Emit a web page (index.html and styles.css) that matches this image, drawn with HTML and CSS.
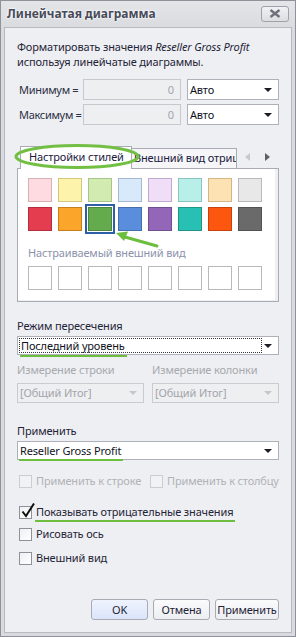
FILE: index.html
```html
<!DOCTYPE html>
<html lang="ru">
<head>
<meta charset="utf-8">
<title>Линейчатая диаграмма</title>
<link rel="stylesheet" href="styles.css">
</head>
<body>
<div class="window">
  <div class="titlebar">
    <span class="title">Линейчатая диаграмма</span>
    <div class="close"><svg width="12" height="9" viewBox="0 0 12 9"><path d="M1.5 1 L10.5 8 M10.5 1 L1.5 8" stroke="#6f727a" stroke-width="2.4" fill="none"/></svg></div>
  </div>
  <div class="content">
    <p class="intro">Форматировать значения <i>Reseller Gross Profit</i><br>используя линейчатые диаграммы.</p>

    <div class="range-row first">
      <span class="range-label">Минимум =</span>
      <div class="num">0</div>
      <div class="combo small">Авто<span class="arrow"></span></div>
    </div>
    <div class="range-row">
      <span class="range-label">Максимум =</span>
      <div class="num">0</div>
      <div class="combo small">Авто<span class="arrow"></span></div>
    </div>

    <div class="tabs">
      <div class="tab-strip">
        <div class="tab active">Настройки стилей</div>
        <div class="tab inactive"><span>Внешний вид отрицательных значений</span></div>
        <div class="tab-nav">
          <span class="nav-left"></span>
          <span class="nav-right"></span>
        </div>
      </div>
      <div class="tab-panel">
        <div class="swatches">
          <span class="sw" style="background:#fddbe1;border-color:#d8b1b7"></span>
          <span class="sw" style="background:#fdf3aa;border-color:#d2c680"></span>
          <span class="sw" style="background:#d1ebb1;border-color:#a7c48b"></span>
          <span class="sw" style="background:#d8e9fc;border-color:#a4bad3"></span>
          <span class="sw" style="background:#f0ddf8;border-color:#c2abcf"></span>
          <span class="sw" style="background:#b8efe9;border-color:#87c5be"></span>
          <span class="sw" style="background:#fde3b4;border-color:#d2b684"></span>
          <span class="sw" style="background:#e8e8e8;border-color:#b9b9b9"></span>
        </div>
        <div class="swatches row2">
          <span class="sw" style="background:#e33d4f;border-color:#b12f3d"></span>
          <span class="sw" style="background:#fba52b;border-color:#c67f1e"></span>
          <span class="sw selected" style="background:#64ab4e;border-color:#4c873d"></span>
          <span class="sw" style="background:#5a8edc;border-color:#446fad"></span>
          <span class="sw" style="background:#9366b8;border-color:#714f8f"></span>
          <span class="sw" style="background:#29c0b4;border-color:#1f958c"></span>
          <span class="sw" style="background:#fc560f;border-color:#c7430b"></span>
          <span class="sw" style="background:#6a6a6a;border-color:#525252"></span>
        </div>
        <div class="custom-label">Настраиваемый внешний вид</div>
        <div class="swatches">
          <span class="sw empty"></span><span class="sw empty"></span><span class="sw empty"></span><span class="sw empty"></span>
          <span class="sw empty"></span><span class="sw empty"></span><span class="sw empty"></span><span class="sw empty"></span>
        </div>
      </div>
      <svg class="ring" width="130" height="30" viewBox="0 0 130 30"><ellipse cx="65" cy="14.5" rx="61" ry="11" fill="none" stroke="#72bf44" stroke-width="3"/></svg>
      <svg class="pointer" width="50" height="22" viewBox="0 0 50 22"><path d="M44 16 L12 7" stroke="#6dbd3f" stroke-width="3" stroke-linecap="round" fill="none"/><path d="M3 3 L15 1.5 L11 11 Z" fill="#6dbd3f"/></svg>
    </div>

    <div class="field-label lbl-mode">Режим пересечения</div>
    <div class="combo wide focus"><span class="focus-rect"><span class="mark">Последний уровень</span></span><span class="arrow"></span></div>

    <div class="dims">
      <div class="dim">
        <div class="field-label disabled">Измерение строки</div>
        <div class="combo disabled">[Общий Итог]<span class="arrow"></span></div>
      </div>
      <div class="dim">
        <div class="field-label disabled">Измерение колонки</div>
        <div class="combo disabled">[Общий Итог]<span class="arrow"></span></div>
      </div>
    </div>

    <div class="field-label lbl-apply">Применить</div>
    <div class="combo wide"><span class="mark">Reseller Gross Profit</span><span class="arrow"></span></div>

    <div class="check-row">
      <label class="check disabled"><span class="box"></span>Применить к строке</label>
      <label class="check disabled second"><span class="box"></span>Применить к столбцу</label>
    </div>

    <label class="check checked-row"><span class="box"><svg class="tick" width="16" height="16" viewBox="0 0 16 16"><path d="M2.5 8.5 L6 13 L14 0.5" stroke="#111" stroke-width="2" fill="none"/></svg></span><span class="mark">Показывать отрицательные значения</span></label>
    <label class="check axis-row"><span class="box"></span>Рисовать ось</label>
    <label class="check look-row"><span class="box"></span>Внешний вид</label>

    <div class="buttons">
      <button class="btn default">OK</button>
      <button class="btn">Отмена</button>
      <button class="btn">Применить</button>
    </div>
  </div>
</div>
</body>
</html>
```

FILE: styles.css
```css
* { box-sizing: border-box; }
html, body { margin: 0; padding: 0; }
body {
  width: 296px;
  height: 637px;
  font-family: "Noto Sans", "Open Sans", sans-serif;
  font-size: 11px;
  letter-spacing: -0.15px;
  color: #1f2438;
  overflow: hidden;
  white-space: nowrap;
}
.window {
  width: 296px;
  height: 637px;
  border: 1px solid #8f929b;
  background: linear-gradient(#e4e5e9, #d9dade 30px, #d9dade);
  display: flex;
  flex-direction: column;
}
.titlebar {
  height: 26px;
  display: flex;
  align-items: center;
  justify-content: space-between;
  padding: 0 6px 2px 6px;
}
.title {
  font-weight: bold;
  font-size: 12px;
  letter-spacing: 0;
  color: #474b59;
  text-shadow: 0 0 3px #ffffff, 0 0 2px #ffffff;
}
.close {
  width: 28px;
  height: 16px;
  border: 1px solid #9fa2aa;
  border-radius: 3px;
  background: linear-gradient(#f1f2f4, #dcdde1);
  display: flex;
  align-items: center;
  justify-content: center;
  margin-top: 1px;
}
.content {
  margin: 0 3px;
  height: 606px;
  border: 1px solid #b7bac2;
  background: #eeeff2;
  padding: 0 12px;
  display: flex;
  flex-direction: column;
  position: relative;
}
.intro {
  margin: 11px 0 0 0;
  line-height: 15px;
}
.intro i { font-style: italic; }

.range-row {
  display: flex;
  align-items: center;
  height: 21px;
  margin-top: 4px;
}
.range-row.first { margin-top: 10px; }
.range-label {
  width: 66px;
  padding-left: 2px;
  color: #2b3045;
  letter-spacing: -0.3px;
}
.num {
  width: 98px;
  height: 21px;
  border: 1px solid #c6c8ce;
  background: #eeeff1;
  color: #a3a5ab;
  text-align: right;
  padding-right: 6px;
  line-height: 19px;
}
.combo {
  position: relative;
  height: 20px;
  border: 1px solid #aeb1b9;
  background: #ffffff;
  line-height: 18px;
  padding-left: 2px;
  color: #10131d;
}
.combo.small { width: 92px; margin-left: 6px; height: 21px; line-height: 19px; }
.arrow {
  position: absolute;
  right: 6px;
  top: 50%;
  margin-top: -2px;
  width: 0; height: 0;
  border-left: 4px solid transparent;
  border-right: 4px solid transparent;
  border-top: 4px solid #1b1d22;
}

.tabs {
  position: relative;
  margin-top: 21px;
}
.tab-strip {
  height: 22px;
  display: flex;
  align-items: flex-end;
  position: relative;
  z-index: 1;
}
.tab {
  height: 22px;
  border: 1px solid #a9acb4;
  border-bottom: none;
  line-height: 20px;
  white-space: nowrap;
  overflow: hidden;
}
.tab.active {
  margin-left: 3px;
  width: 112px;
  background: #ffffff;
  padding-left: 8px;
  height: 23px;
  margin-bottom: -1px;
  color: #1a2040;
}
.tab.inactive {
  width: 105px;
  height: 20px;
  line-height: 18px;
  background: #f6f6f8;
  border-left: none;
  padding-left: 2px;
  color: #1a2040;
}
.tab-nav {
  display: flex;
  align-items: center;
  height: 22px;
  padding-left: 8px;
  gap: 15px;
}
.nav-left {
  width: 0; height: 0;
  border-top: 4px solid transparent;
  border-bottom: 4px solid transparent;
  border-right: 5px solid #c6c8cc;
}
.nav-right {
  width: 0; height: 0;
  border-top: 4px solid transparent;
  border-bottom: 4px solid transparent;
  border-left: 5px solid #5c5f66;
}
.tab-panel {
  width: 262px;
  height: 134px;
  border: 1px solid #a9acb4;
  background: #ffffff;
  box-shadow: inset -3px -1px 0 #efeff1;
  padding: 9px 0 0 10px;
}
.swatches {
  display: flex;
  gap: 6px;
}
.swatches.row2 { margin-top: 5px; }
.sw {
  width: 24px;
  height: 24px;
  border: 1px solid;
  display: block;
}
.sw.empty { border-color: #b9b9bc; background: #ffffff; }
.sw.selected {
  outline: 2px solid #2e5fa6;
  outline-offset: 1px;
}
.custom-label {
  margin-top: 15px;
  line-height: 14px;
  color: #8c91ab;
  margin-bottom: 6px;
}
.ring {
  position: absolute;
  left: -5px;
  top: -4px;
  z-index: 2;
}
.pointer {
  position: absolute;
  left: 96px;
  top: 84px;
  z-index: 2;
}

.field-label {
  line-height: 14px;
  color: #1f2438;
}
.field-label.disabled { color: #a7a9ae; }
.lbl-mode { margin-top: 17px; }
.combo.wide { margin-top: 3px; height: 19px; line-height: 17px; }
.combo.focus { padding: 1px; }
.focus-rect {
  display: block;
  height: 15px;
  width: 243px;
  border: 1px dotted #333;
  line-height: 13px;
  padding-left: 1px;
}
.mark { position: relative; }
.mark::after {
  content: "";
  position: absolute;
  left: -1px;
  right: -2px;
  bottom: -3px;
  height: 2px;
  background: #6dbd3f;
}
.combo.focus .mark::after { bottom: -4px; }

.dims {
  display: flex;
  gap: 8px;
  margin-top: 8px;
}
.dim { width: 127px; }
.combo.disabled {
  margin-top: 6px;
  height: 20px;
  line-height: 18px;
  border-color: #c9cbd0;
  background: #eeeff1;
  color: #a3a5ab;
  padding-left: 2px;
}
.combo.disabled .arrow { border-top-color: #c5c7cb; }

.lbl-apply { margin-top: 21px; }

.check {
  display: flex;
  align-items: center;
  line-height: 14px;
  height: 14px;
}
.box {
  position: relative;
  width: 13px;
  height: 13px;
  border: 1px solid #8e919a;
  background: linear-gradient(135deg, #eef0f3, #ffffff);
  margin: 0 4px 0 2px;
  flex: none;
}
.check.disabled { color: #b0b2b7; }
.check.disabled .box { border-color: #cbcdd2; background: #f1f2f4; }
.check-row {
  display: flex;
  margin-top: 14px;
}
.check-row .check:first-child { width: 131px; }
.checked-row { margin-top: 17px; }
.axis-row { margin-top: 8px; }
.look-row { margin-top: 10px; }
.tick {
  position: absolute;
  left: 0px;
  top: -4px;
}

.buttons {
  margin-top: auto;
  margin-bottom: 12px;
  display: flex;
  justify-content: flex-end;
  gap: 5px;
}
.btn {
  font-family: inherit;
  font-size: 11px;
  letter-spacing: -0.15px;
  height: 21px;
  border: 1px solid #a8abb3;
  border-radius: 3px;
  background: linear-gradient(#fbfbfc, #eceef1);
  color: #1f2438;
  padding: 0;
  width: 57px;
  line-height: 19px;
}
.btn:last-child { width: 64px; }
.btn.default { background: linear-gradient(#eef3fd, #dbe5fa); }
```
